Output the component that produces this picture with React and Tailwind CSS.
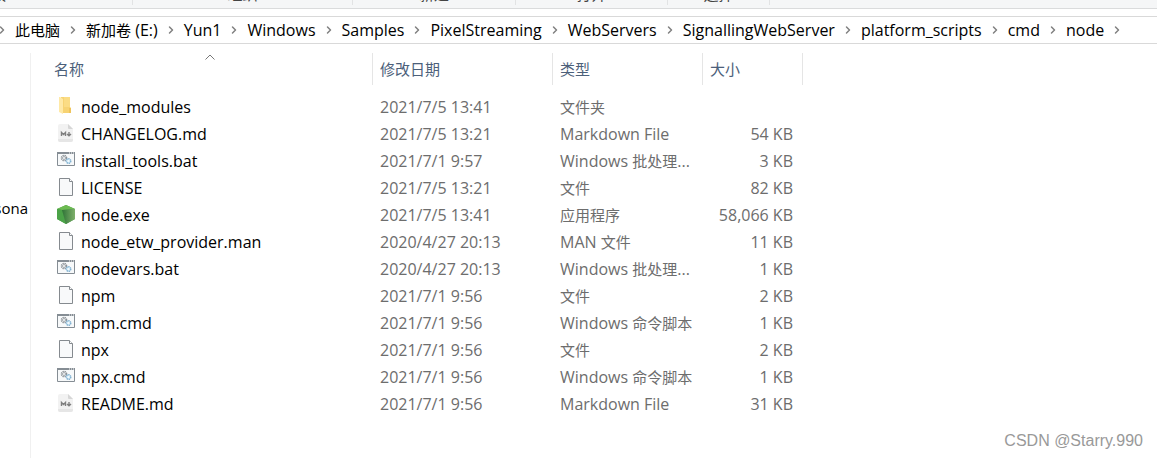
import { ChevronRight } from "lucide-react";

const ribbonGroups = [
  { label: "组织", className: "w-[220px]" },
  { label: "新建", className: "w-[163px]" },
  { label: "打开", className: "w-[152px]" },
  { label: "选择", className: "w-[102px]" },
];

const crumbs = [
  "此电脑",
  "新加卷 (E:)",
  "Yun1",
  "Windows",
  "Samples",
  "PixelStreaming",
  "WebServers",
  "SignallingWebServer",
  "platform_scripts",
  "cmd",
  "node",
];

const files = [
  { name: "node_modules", icon: "folder", date: "2021/7/5 13:41", type: "文件夹", size: "" },
  { name: "CHANGELOG.md", icon: "markdown", date: "2021/7/5 13:21", type: "Markdown File", size: "54 KB" },
  { name: "install_tools.bat", icon: "script", date: "2021/7/1 9:57", type: "Windows 批处理...", size: "3 KB" },
  { name: "LICENSE", icon: "file", date: "2021/7/5 13:21", type: "文件", size: "82 KB" },
  { name: "node.exe", icon: "node", date: "2021/7/5 13:41", type: "应用程序", size: "58,066 KB" },
  { name: "node_etw_provider.man", icon: "file", date: "2020/4/27 20:13", type: "MAN 文件", size: "11 KB" },
  { name: "nodevars.bat", icon: "script", date: "2020/4/27 20:13", type: "Windows 批处理...", size: "1 KB" },
  { name: "npm", icon: "file", date: "2021/7/1 9:56", type: "文件", size: "2 KB" },
  { name: "npm.cmd", icon: "script", date: "2021/7/1 9:56", type: "Windows 命令脚本", size: "1 KB" },
  { name: "npx", icon: "file", date: "2021/7/1 9:56", type: "文件", size: "2 KB" },
  { name: "npx.cmd", icon: "script", date: "2021/7/1 9:56", type: "Windows 命令脚本", size: "1 KB" },
  { name: "README.md", icon: "markdown", date: "2021/7/1 9:56", type: "Markdown File", size: "31 KB" },
];

// Chinese glyphs look larger than Latin ones, so they are set one size down
function MixedText({ children }) {
  return children.split(/([\u4e00-\u9fff]+)/).map((part, i) =>
    i % 2 ? (
      <span key={i} className="text-[15px]">
        {part}
      </span>
    ) : (
      part
    )
  );
}

function FolderIcon() {
  return (
    <svg viewBox="0 0 20 20" className="w-5 h-5 mb-[2px]">
      <path d="M5 1h9v10l1 1v5H5z" fill="#f7d373" />
      <path d="M8 1h6v10H8z" fill="#fbdc84" />
      <path d="M3 1h1l3 2v15l-4-2z" fill="#ffe9a6" />
      <path d="M13 12h2v5h-2z" fill="#efc45c" />
    </svg>
  );
}

function MarkdownIcon() {
  return (
    <svg viewBox="0 0 20 20" className="w-5 h-5 mb-[2px]">
      <path d="M4 1h8l5 5v11a2 2 0 0 1-2 2H4a2 2 0 0 1-2-2V3a2 2 0 0 1 2-2z" fill="#f2f2f2" />
      <path d="M2 16v1a2 2 0 0 0 2 2h11a2 2 0 0 0 2-2v-1z" fill="#e6e6e6" />
      <path d="M12 1l5 5h-4a1 1 0 0 1-1-1z" fill="#d6d6d6" />
      <path d="M5.500 13V9.500l2 2 2-2V13" fill="none" stroke="#808080" strokeWidth="1.400" />
      <path d="M13 9v3.500M11 11l2 1.800L15 11" fill="none" stroke="#808080" strokeWidth="1.400" />
    </svg>
  );
}

function ScriptIcon() {
  return (
    <svg viewBox="0 0 20 20" className="w-5 h-5 mb-[2px]">
      <path d="M1.500 2.500h17v13h-17z" fill="#f7f9fa" stroke="#858d94" />
      <path d="M1 2h18v2H1z" fill="#858d94" />
      <path d="M13 3h1M15 3h1M17 3h1" stroke="#fff" />
      <circle cx="8" cy="8" r="2.500" fill="none" stroke="#8b9196" strokeWidth="1.600" strokeDasharray="1.300 .7" />
      <circle cx="8" cy="8" r="1.500" fill="none" stroke="#9da3a8" strokeWidth=".8" />
      <circle cx="12.500" cy="11" r="2.300" fill="#d8edf9" stroke="#7fb0d0" strokeWidth="1.400" strokeDasharray="1.300 .6" />
      <circle cx="12.500" cy="11" r=".8" fill="#fff" />
    </svg>
  );
}

function FileIcon() {
  return (
    <svg viewBox="0 0 20 20" className="w-5 h-5 mb-[2px]">
      <path d="M3.500 1.500h10l3 3v14h-13z" fill="#f8f9fa" stroke="#858a8f" />
      <path d="M13.500 1.500v3h3" fill="#fff" stroke="#858a8f" />
    </svg>
  );
}

function NodeIcon() {
  return (
    <svg viewBox="0 0 20 20" className="w-5 h-5 mb-[2px]">
      <defs>
        <linearGradient id="node-face" x1="0" x2="1" y1="0" y2="0">
          <stop offset="0" stopColor="#2f7437" />
          <stop offset="1" stopColor="#7fb06c" />
        </linearGradient>
      </defs>
      <path d="M10 1l9 4v10l-9 5-9-5V5z" fill="#4a9c46" />
      <path d="M1 5l9-4 9 4-13 1z" fill="#6dbb52" />
      <path d="M1 5l5 1 4 14-9-5z" fill="#4ba348" />
      <path d="M6 6l13-1v10l-9 5z" fill="url(#node-face)" />
    </svg>
  );
}

const icons = {
  folder: FolderIcon,
  markdown: MarkdownIcon,
  script: ScriptIcon,
  file: FileIcon,
  node: NodeIcon,
};

function Ribbon() {
  return (
    <div className="flex h-[9px] bg-[#f5f6f7] border-b border-[#dadbdc] overflow-hidden text-[15px] leading-4 text-[#444]">
      <div className="flex w-[133px] h-[5px] items-end border-r border-[#e2e3e4]">
        <span className="flex w-[6px] justify-end whitespace-nowrap pb-[3px]">剪贴板</span>
      </div>
      {ribbonGroups.map((g) => (
        <div
          key={g.label}
          className={`flex h-[5px] items-end justify-center border-r border-[#e2e3e4] pb-[3px] ${g.className}`}
        >
          {g.label}
        </div>
      ))}
    </div>
  );
}

function AddressBar() {
  return (
    <nav className="mt-[7px] flex h-7 items-center overflow-hidden border-y border-[#d9d9d9] pb-px text-black">
      <ChevronRight strokeWidth={3} className="-ml-1 w-3 h-3 shrink-0 text-[#808080]" />
      {crumbs.map((c) => (
        <div key={c} className="flex shrink-0 items-center">
          <button className="whitespace-nowrap px-[7px]">
            <MixedText>{c}</MixedText>
          </button>
          <ChevronRight strokeWidth={3} className="w-3 h-3 text-[#808080]" />
        </div>
      ))}
    </nav>
  );
}

function FileTable() {
  return (
    <table className="w-[757px] table-fixed border-separate border-spacing-0">
      <colgroup>
        <col className="w-[327px]" />
        <col className="w-[180px]" />
        <col className="w-[150px]" />
        <col className="w-[100px]" />
      </colgroup>
      <thead>
        <tr className="h-8 text-left text-[15px] text-[#4c607a]">
          <th className="relative border-r border-[#e5e5e5] p-0 pl-2 font-normal">
            <svg viewBox="0 0 10 6" className="absolute left-1/2 top-px -ml-1 w-[10px] h-[6px]">
              <path d="M.5 5.500l4.500-4.500 4.500 4.500" fill="none" stroke="#777" />
            </svg>
            名称
          </th>
          <th className="border-r border-[#e5e5e5] p-0 pl-[7px] font-normal">修改日期</th>
          <th className="border-r border-[#e5e5e5] p-0 pl-[7px] font-normal">类型</th>
          <th className="border-r border-[#e5e5e5] p-0 pl-[7px] font-normal">大小</th>
        </tr>
      </thead>
      <tbody className="text-[#6d6d6d] before:block before:h-2">
        {files.map((f) => {
          const Icon = icons[f.icon];
          return (
            <tr key={f.name} className="h-[27px] whitespace-nowrap">
              <td className="p-0 pl-[10px]">
                <div className="flex items-center gap-[5px] text-black">
                  <Icon />
                  {f.name}
                </div>
              </td>
              <td className="p-0 pl-[7px]">{f.date}</td>
              <td className="p-0 pl-[7px]">
                <MixedText>{f.type}</MixedText>
              </td>
              <td className="p-0 pr-[10px] text-right">{f.size}</td>
            </tr>
          );
        })}
      </tbody>
    </table>
  );
}

export default function App() {
  return (
    <div className="relative flex min-h-screen flex-col overflow-hidden bg-white font-['Open_Sans','Noto_Sans_CJK_SC',sans-serif] text-base leading-5">
      <Ribbon />
      <AddressBar />
      <div className="mt-[9px] flex flex-1">
        <aside className="flex w-[31px] shrink-0 justify-end overflow-hidden border-r border-[#f0f0f0] pr-[2px] pt-[145px] text-[15px] text-black">
          Persona
        </aside>
        <main className="pl-[15px]">
          <FileTable />
        </main>
      </div>
      <div className="absolute bottom-[5px] right-[14px] font-['Liberation_Sans',sans-serif] text-base text-[#999]">
        CSDN @Starry.990
      </div>
    </div>
  );
}
